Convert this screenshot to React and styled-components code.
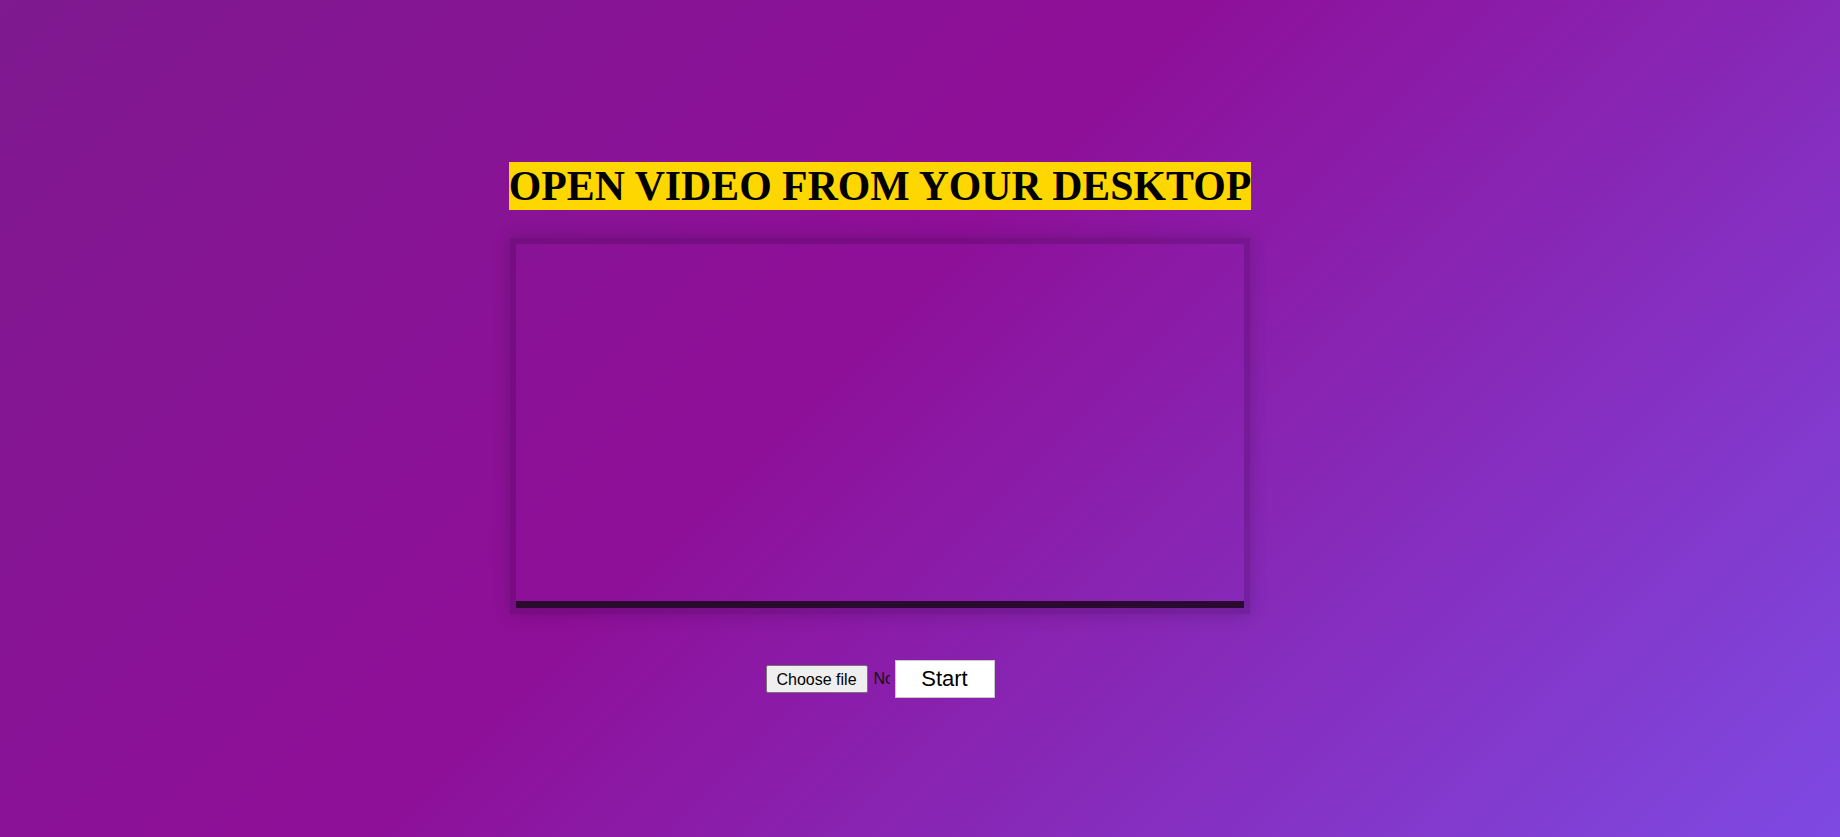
import React from "react";
import styled, { createGlobalStyle } from "styled-components";

const GlobalStyle = createGlobalStyle`
  html, body {
    margin: 0;
    padding: 0;
  }
  body {
    font-family: "Liberation Serif", "Times New Roman", serif;
    background: linear-gradient(135deg, #7f1a90 0%, #8e0f98 44%, #7e4ae2 100%);
    min-height: 100vh;
  }
`;

const Page = styled.div`
  min-height: 100vh;
  display: flex;
  justify-content: center;
  padding-right: 80px;
  box-sizing: border-box;
`;

const Column = styled.main`
  width: 740px;
  padding-top: 162px;
  display: flex;
  flex-direction: column;
  align-items: center;
`;

const Title = styled.h1`
  margin: 0;
  display: inline-block;
  background: #ffd700;
  color: #000;
  font-family: "Liberation Serif", "Times New Roman", serif;
  font-weight: 700;
  font-size: 41.8px;
  line-height: 48px;
  white-space: nowrap;
`;

const Frame = styled.div`
  margin-top: 28px;
  width: 740px;
  box-sizing: border-box;
  border: 6px solid rgba(40, 0, 50, 0.2);
  box-shadow: 0 0 16px rgba(30, 0, 40, 0.22);
  display: flex;
  flex-direction: column;
`;

const Screen = styled.div`
  height: 357px;
  background: transparent;
`;

const Track = styled.div`
  height: 7px;
  background: #2b0a30;
`;

const Controls = styled.div`
  margin-top: 46px;
  display: flex;
  align-items: center;
  gap: 5px;
  font-family: "Liberation Sans", Arial, sans-serif;
`;

const FilePicker = styled.label`
  width: 124px;
  display: flex;
  align-items: center;
  gap: 6px;
  overflow: hidden;
  white-space: nowrap;
  cursor: pointer;
`;

const HiddenInput = styled.input`
  display: none;
`;

const FileButton = styled.span`
  flex: none;
  font-family: "Liberation Sans", Arial, sans-serif;
  font-size: 16px;
  line-height: 19px;
  padding: 4px 10px 3px;
  color: #000;
  background: #efefef;
  border: 1px solid #767676;
  border-radius: 2px;
`;

const FileName = styled.span`
  font-size: 16px;
  color: #111;
`;

const StartButton = styled.button`
  width: 100px;
  height: 38px;
  box-sizing: border-box;
  background: #fff;
  border: 1px solid #c8c8c8;
  font-family: "Liberation Sans", Arial, sans-serif;
  font-size: 22px;
  color: #000;
  padding: 0;
  cursor: pointer;
`;

export default function App() {
  return (
    <>
      <GlobalStyle />
      <Page>
        <Column>
          <Title>OPEN VIDEO FROM YOUR DESKTOP</Title>
          <Frame>
            <Screen />
            <Track />
          </Frame>
          <Controls>
            <FilePicker>
              <HiddenInput type="file" accept="video/*" />
              <FileButton>Choose file</FileButton>
              <FileName>No file chosen</FileName>
            </FilePicker>
            <StartButton>Start</StartButton>
          </Controls>
        </Column>
      </Page>
    </>
  );
}
